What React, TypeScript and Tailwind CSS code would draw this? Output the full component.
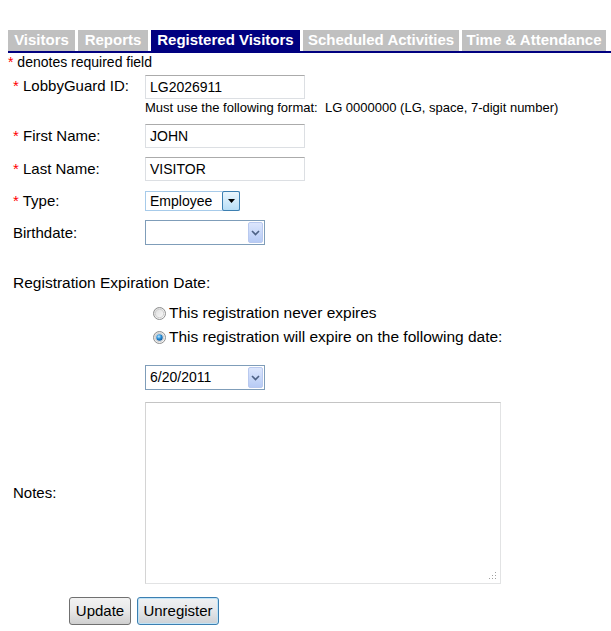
import React from "react";

const Star = () => <span className="text-[#ff0000]">*</span>;

function Label({ children, required }: { children: React.ReactNode; required?: boolean }) {
  return (
    <div className="w-[132px] shrink-0 text-[15px] leading-[18px] whitespace-pre">
      {required ? (
        <>
          <Star /> {children}
        </>
      ) : (
        children
      )}
    </div>
  );
}

function TextInput({ value }: { value: string }) {
  return (
    <div className="w-[160px] h-[24px] border border-[#dcdfe3] border-t-[#ababab] bg-white pl-[4px] flex items-center text-[14px]">
      {value}
    </div>
  );
}

function ChevronBtn() {
  return (
    <div className="absolute right-[1px] top-[1px] bottom-[1px] w-[15px] rounded-[2px] border border-[#b9c9ef] bg-gradient-to-b from-[#dce6fd] to-[#b7cbf5] flex items-center justify-center">
      <svg width="9" height="6" viewBox="0 0 9 6">
        <path d="M1 1 L4.5 4.5 L8 1" stroke="#4d6185" strokeWidth="1.6" fill="none" />
      </svg>
    </div>
  );
}

function DateSelect({ value, width }: { value: string; width: string }) {
  return (
    <div className={`relative h-[25px] border border-[#7f9db9] bg-white pl-[4px] flex items-center text-[14px] ${width}`}>
      {value}
      <ChevronBtn />
    </div>
  );
}

function Radio({ checked }: { checked?: boolean }) {
  return (
    <svg width="13" height="13" viewBox="0 0 13 13" className="shrink-0">
      <defs>
        <linearGradient id="rg" x1="0" y1="0" x2="1" y2="1">
          <stop offset="0" stopColor="#d9d9d9" />
          <stop offset="1" stopColor="#ffffff" />
        </linearGradient>
        <radialGradient id="dot" cx="0.4" cy="0.35" r="0.7">
          <stop offset="0" stopColor="#bfe7ff" />
          <stop offset="0.5" stopColor="#2a90d8" />
          <stop offset="1" stopColor="#0b4f91" />
        </radialGradient>
      </defs>
      <circle cx="6.5" cy="6.5" r="6" fill="url(#rg)" stroke="#8e8f8f" strokeWidth="1" />
      <circle cx="6.5" cy="6.5" r="4.2" fill="none" stroke="#cfcfcf" strokeWidth="1" />
      {checked && <circle cx="6.5" cy="6.5" r="3.2" fill="url(#dot)" />}
    </svg>
  );
}

export default function App() {
  const tabs = [
    { t: "Visitors", w: "w-[67px]" },
    { t: "Reports", w: "w-[70px]" },
    { t: "Registered Visitors", w: "w-[149px]", active: true },
    { t: "Scheduled Activities", w: "w-[156px]" },
    { t: "Time & Attendance", w: "w-[144px]" },
  ];
  return (
    <div className="w-[611px] h-[631px] bg-white text-black overflow-hidden" style={{ fontFamily: '"Liberation Sans", Arial, sans-serif' }}>
      <div className="pt-[30px] pl-[8px]">
        <div className="flex gap-[3px] border-b-2 border-[#000080]">
          {tabs.map((tab) => (
            <div
              key={tab.t}
              className={`${tab.w} h-[21px] flex items-center justify-center text-[15px] font-bold text-white whitespace-nowrap ${tab.active ? "bg-[#000080]" : "bg-[#c0c0c0]"}`}
            >
              {tab.t}
            </div>
          ))}
        </div>
        <div className="text-[14px] leading-[17px] mt-[1px]">
          <Star /> denotes required field
        </div>
      </div>

      <div className="pl-[13px] mt-[4px]">
        <div className="flex items-start">
          <div className="pt-[2px]">
            <Label required>LobbyGuard ID:</Label>
          </div>
          <div>
            <TextInput value="LG2026911" />
            <div className="text-[13px] leading-[16px] mt-[1px] whitespace-pre">
              {"Must use the following format:  LG 0000000 (LG, space, 7-digit number)"}
            </div>
          </div>
        </div>

        <div className="flex items-center mt-[8px]">
          <Label required>First Name:</Label>
          <TextInput value="JOHN" />
        </div>
        <div className="flex items-center mt-[9px]">
          <Label required>Last Name:</Label>
          <TextInput value="VISITOR" />
        </div>
        <div className="flex items-center mt-[10px]">
          <Label required>Type:</Label>
          <div className="relative w-[95px] h-[20px] border border-[#a7cbea] bg-white pl-[4px] flex items-center text-[14px]">
            Employee
            <div className="absolute right-[-1px] top-[-1px] bottom-[-1px] w-[18px] rounded-[2px] border border-[#3c7fb1] bg-gradient-to-b from-[#eaf6fd] to-[#b8def6] flex items-center justify-center">
              <svg width="7" height="4" viewBox="0 0 7 4">
                <path d="M0 0 L7 0 L3.5 4 Z" fill="#000" />
              </svg>
            </div>
          </div>
        </div>
        <div className="flex items-center mt-[9px]">
          <Label>Birthdate:</Label>
          <DateSelect value="" width="w-[120px]" />
        </div>

        <div className="text-[15.5px] leading-[18px] mt-[29px]">Registration Expiration Date:</div>

        <div className="ml-[140px] mt-[9px] text-[15.5px]">
          <div className="flex items-center h-[24px] gap-[3px]">
            <Radio />
            <span>This registration never expires</span>
          </div>
          <div className="flex items-center h-[24px] gap-[3px]">
            <Radio checked />
            <span>This registration will expire on the following date:</span>
          </div>
        </div>

        <div className="ml-[132px] mt-[16px]">
          <DateSelect value="6/20/2011" width="w-[120px]" />
        </div>

        <div className="flex items-center mt-[12px]">
          <Label>Notes:</Label>
          <div className="relative w-[356px] h-[182px] border border-[#e2e3e4] border-t-[#c4c4c4] border-l-[#d4d4d4] bg-white">
            <svg width="9" height="9" viewBox="0 0 9 9" className="absolute right-[3px] bottom-[3px]">
              <g fill="#a0a0a0">
                <rect x="7" y="1" width="1" height="1" />
                <rect x="4" y="4" width="1" height="1" />
                <rect x="7" y="4" width="1" height="1" />
                <rect x="1" y="7" width="1" height="1" />
                <rect x="4" y="7" width="1" height="1" />
                <rect x="7" y="7" width="1" height="1" />
              </g>
            </svg>
          </div>
        </div>

        <div className="flex gap-[6px] ml-[56px] mt-[13px]">
          <div className="w-[62px] h-[28px] rounded-[3px] border border-[#707070] bg-gradient-to-b from-[#f2f2f2] via-[#e8e8e8] to-[#cfcfcf] flex items-center justify-center text-[15px]">
            Update
          </div>
          <div className="w-[82px] h-[28px] rounded-[3px] border border-[#3c7fb1] bg-gradient-to-b from-[#f0f2f4] via-[#e4e6e9] to-[#cdd1d5] flex items-center justify-center text-[15px] shadow-[inset_0_0_0_1px_#bfe3f7]">
            Unregister
          </div>
        </div>
      </div>
    </div>
  );
}
